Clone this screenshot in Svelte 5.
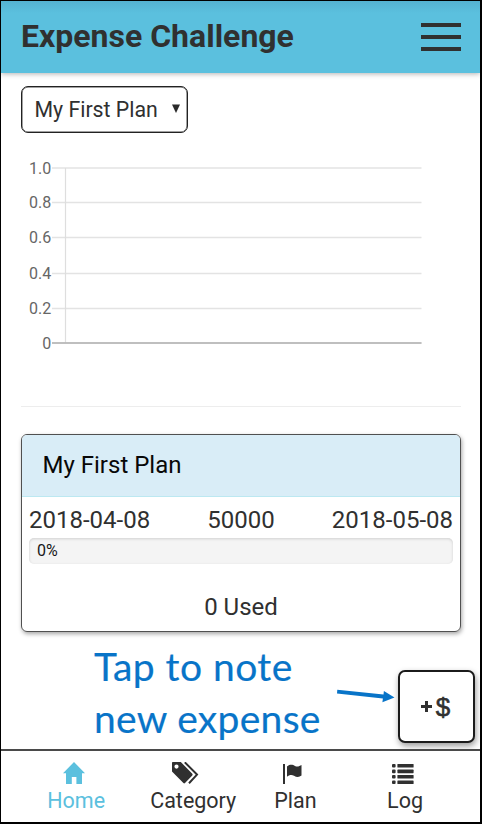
<script>
  const ticks = [
    { label: '1.0', y: 8 },
    { label: '0.8', y: 42.5 },
    { label: '0.6', y: 77.5 },
    { label: '0.4', y: 113.5 },
    { label: '0.2', y: 148.5 },
    { label: '0', y: 183 }
  ];
</script>

<div class="screen">
  <header>
    <h1>Expense Challenge</h1>
    <div class="menu"><i></i><i></i><i></i></div>
  </header>

  <main>
    <div class="select"><span>My First Plan</span>
      <svg width="8" height="9" viewBox="0 0 8 9"><path d="M0 0.5H8L4 9Z" fill="#2b2b2b" /></svg>
    </div>

    <svg class="chart" width="440" height="210" viewBox="0 -10 440 210">
      {#each ticks as t}
        <text x="30.3" y={t.y + 5.6} text-anchor="end">{t.label}</text>
        <line x1="31" x2="400.5" y1={t.y} y2={t.y} stroke="#e3e3e3" stroke-width="1.4" />
      {/each}
      <line x1="44.5" x2="44.5" y1="8" y2="183" stroke="#dedede" stroke-width="1.2" />
      <line x1="31" x2="400.5" y1="183" y2="183" stroke="#b0b0b0" stroke-width="1.5" />
    </svg>

    <hr />

    <section class="card">
      <div class="card-head">My First Plan</div>
      <div class="card-body">
        <div class="row"><span>2018-04-08</span><span>50000</span><span>2018-05-08</span></div>
        <div class="progress">0%</div>
        <div class="used">0 Used</div>
      </div>
    </section>

    <div class="tip">
      <p><span class="l1">Tap to note</span><br /><span class="l2">new expense</span></p>
      <svg class="arrow" width="58" height="20" viewBox="0 0 58 20">
        <path d="M.3 2.7 46.5 7.4 46.9 4 57.5 10.4 45.4 15.3 45.9 11.5 0 6.4Z" fill="#0874c8" />
      </svg>
      <div class="add"><span class="plus"></span><span class="dollar">$</span></div>
    </div>
  </main>

  <nav>
    <div class="item home">
      <svg width="22" height="22" viewBox="0 0 22 22"><path d="M11 0 22 11.2H19V22H13.4V15H8.8V22H3V11.2H0L11 0Z" fill="currentColor" /></svg>
      <span>Home</span>
    </div>
    <div class="item category">
      <svg width="27" height="22" viewBox="0 0 27 22">
        <path fill-rule="evenodd" d="M.8 0H8.8L20.3 11.8Q21 12.6 20.3 13.4L13 21Q12.2 21.8 11.4 21L0 9.5V.8Q0 0 .8 0ZM4.5 2.5a2.1 2.1 0 1 0 0 4.2a2.1 2.1 0 1 0 0-4.2Z" fill="currentColor" />
        <path d="M12.8.3 25 12.6 17 21.2" fill="none" stroke="currentColor" stroke-width="2" />
      </svg>
      <span>Category</span>
    </div>
    <div class="item plan">
      <svg width="19" height="20" viewBox="0 0 19 20"><path d="M0 0H2V20H0ZM4 2.5C7 0 10 .8 12 2C14 3 16.5 2.4 18.5 1V11.5C16 13.5 13.5 13.2 11 11.7C8.5 10.3 6 11 4 12.7Z" fill="currentColor" /></svg>
      <span>Plan</span>
    </div>
    <div class="item log">
      <svg width="22" height="20" viewBox="0 0 22 20" fill="currentColor">
        {#each [0, 5.6, 11, 16.4] as y}
          <rect x="0" y={y} width="3.6" height="3.6" rx="1" />
          <rect x="5.4" y={y} width="16.2" height="3.6" rx=".6" />
        {/each}
      </svg>
      <span>Log</span>
    </div>
  </nav>
</div>

<style>
  :global(body) { margin: 0; background: #fff; }
  .screen {
    box-sizing: border-box; width: 482px; height: 824px; border: 1px solid #000;
    border-right-width: 2px; border-bottom-width: 2px; display: flex; flex-direction: column;
    background: #fff; color: #303030; font-family: Roboto, "Liberation Sans", sans-serif;
    white-space: nowrap; overflow: hidden;
  }
  header {
    height: 72px; flex: none; box-sizing: border-box; padding: 0 19px 0 20px; display: flex;
    align-items: center; justify-content: space-between;
    background: linear-gradient(#55b2d1, #5bc0de 12px);
    box-shadow: 0 1px 5px rgba(0,0,0,.3);
  }
  h1 { margin: -2px 0 0; font-size: 32px; line-height: 40px; font-weight: 700; }
  .menu { display: flex; flex-direction: column; gap: 8px; width: 40px; margin-top: -1px; }
  .menu i { height: 4px; background: #303030; }
  main { flex: 1; padding: 13px 19px 0 20px; display: flex; flex-direction: column; min-height: 0; }
  .select {
    box-sizing: border-box; width: 167px; height: 47px; border: 1.5px solid #222; border-radius: 7px;
    box-shadow: inset 0 0 0 .5px #444;
    display: flex; align-items: center; padding: 0 7px 0 12.5px; justify-content: space-between;
    font-size: 21.3px; line-height: 26px; flex: none;
  }
  .select svg { margin-top: -3px; }
  .chart { margin-top: 17px; flex: none; }
  .chart text { font: 16px Roboto, sans-serif; fill: #666; }
  hr { width: 100%; margin: 46px 0 0; border: 0; height: 1px; background: #ededed; flex: none; }
  .card {
    box-sizing: border-box; height: 198px; margin-top: 27px; flex: none; border: 1.5px solid #505050;
    border-radius: 6px; box-shadow: 1px 2px 4px rgba(0,0,0,.35); overflow: hidden;
  }
  .card-head {
    box-sizing: border-box; height: 62px; padding: 0 20.5px; background: #d9edf7;
    border-bottom: 1px solid #bce8f1; color: #080808; font-size: 24px; line-height: 60px;
  }
  .card-body { padding: 9px 7px 0; }
  .row { display: flex; justify-content: space-between; font-size: 24px; line-height: 29px; }
  .progress {
    margin-top: 3px; height: 26px; border-radius: 5px; background: #f4f4f4; padding-left: 8px;
    box-shadow: inset 0 1px 3px rgba(0,0,0,.15); font-size: 16px; line-height: 26px; color: #181818;
  }
  .used { margin-top: 28px; text-align: center; font-size: 24px; line-height: 30px; }
  .tip { position: relative; display: flex; align-items: flex-start; margin: 8px -17px 0 0; padding-left: 73px; }
  .tip p { margin: 0; width: 243px; flex: none; font: 39px/52px Lato, sans-serif; color: #0874c8; -webkit-text-stroke: .2px #0874c8; }
  .l1 { letter-spacing: .45px; }
  .l2 { letter-spacing: .3px; }
  .arrow { margin-top: 47px; flex: none; }
  .add {
    box-sizing: border-box; width: 77px; height: 73px; margin: 30px 0 0 3px; flex: none;
    border: 2px solid #1b1b1b; border-radius: 7px; background: #fff;
    box-shadow: 1px 3px 6px rgba(0,0,0,.4); display: flex; align-items: center; justify-content: center; gap: 4px;
  }
  .plus {
    width: 11px; height: 11px;
    background: linear-gradient(#303030, #303030) center / 100% 3px no-repeat, linear-gradient(#303030, #303030) center / 3px 100% no-repeat;
  }
  .dollar { font: 500 26px/30px "Liberation Sans", sans-serif; -webkit-text-stroke: .6px #303030; margin: 1px 2px 0 0; }
  nav {
    position: relative; box-sizing: border-box; height: 73px; flex: none; display: flex;
    border-top: 2px solid #4a4a4a; padding-left: 25.5px; background: #fff;
  }
  .item { display: flex; flex-direction: column; align-items: center; height: 70px; }
  .item svg { margin-top: 11px; }
  .item span { margin-top: auto; font-size: 21.5px; line-height: 26px; padding-bottom: 7px; }
  .home { width: 100px; color: #5bc0de; }
  .home svg { margin-left: -4px; }
  .category { width: 136px; }
  .category svg { margin-left: -15px; }
  .plan { width: 70px; }
  .plan svg { margin: 13px 0 0 -5px; }
  .log { width: 151px; }
  .log svg { margin: 13px 0 0 -5px; }
</style>
